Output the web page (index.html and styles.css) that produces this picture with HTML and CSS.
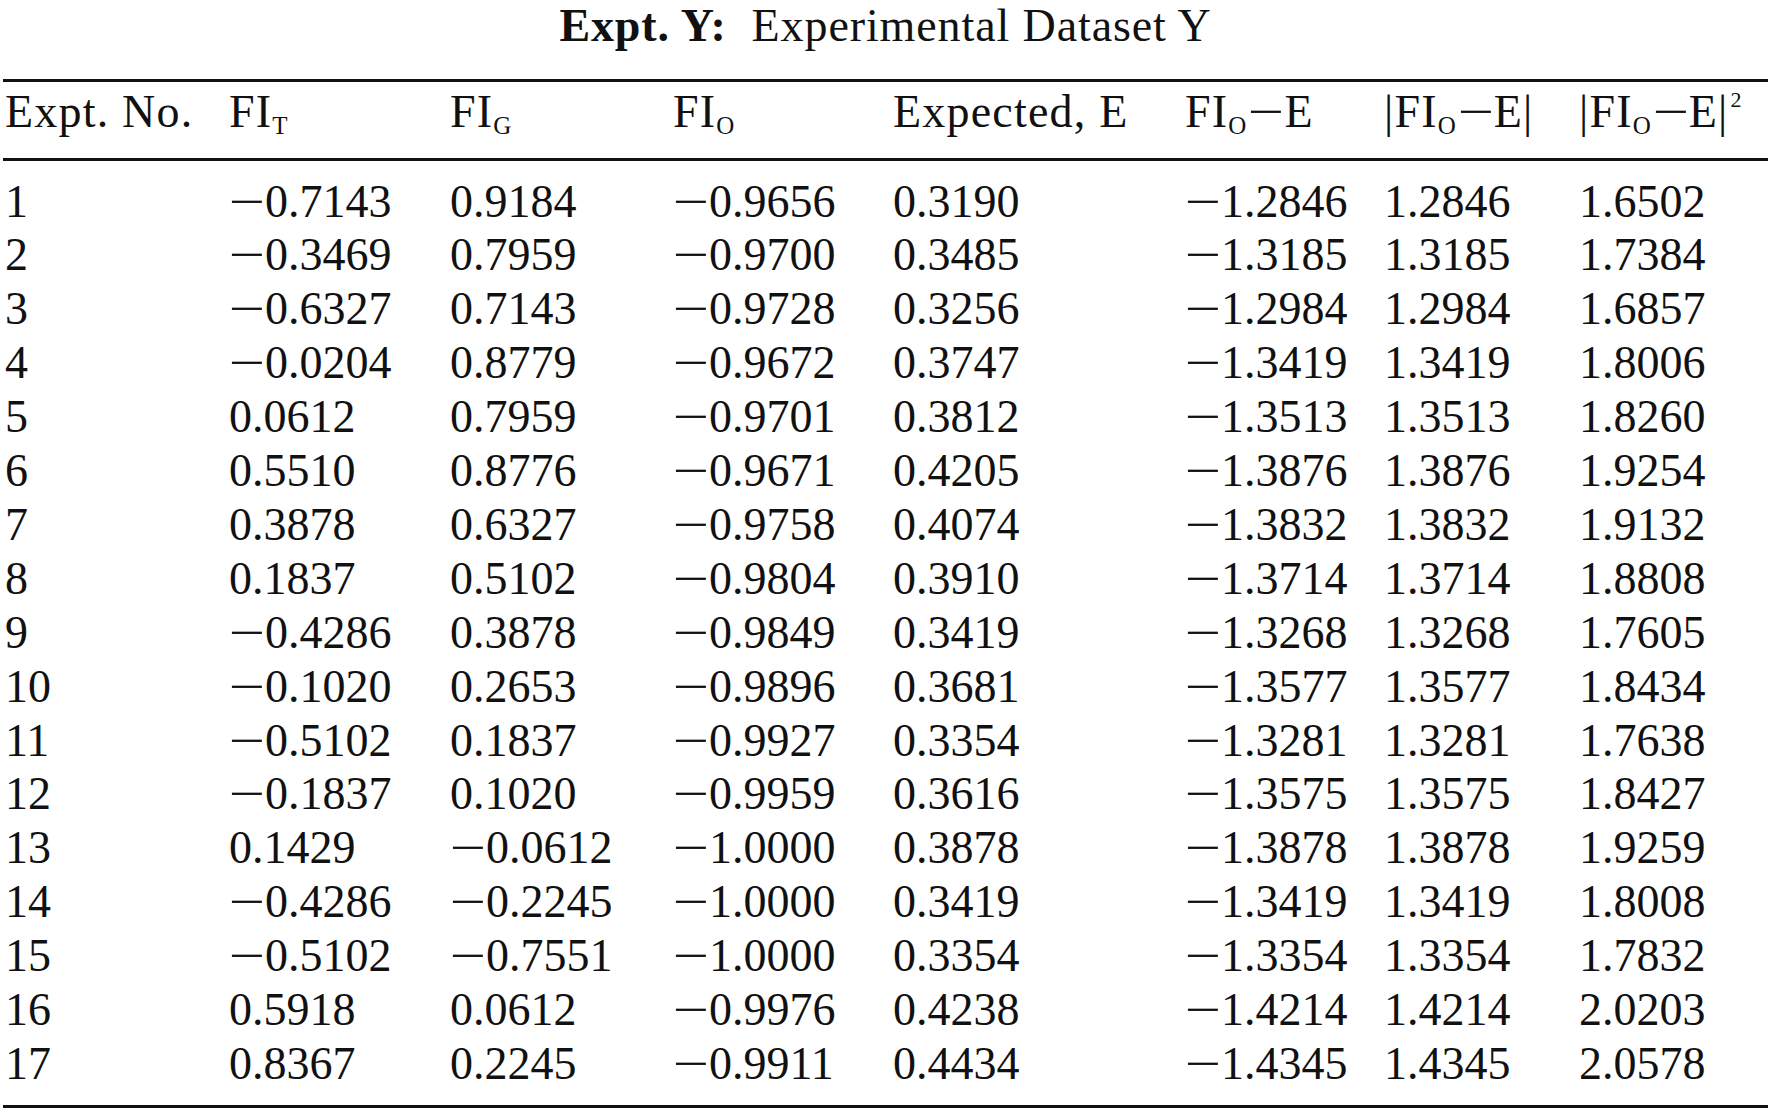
FILE: index.html
```html
<!DOCTYPE html>
<html lang="en">
<head>
<meta charset="utf-8">
<title>Expt. Y: Experimental Dataset Y</title>
<link rel="stylesheet" href="styles.css">
</head>
<body>
<div class="page">
  <h1 class="title"><b>Expt. Y:</b>&nbsp; Experimental Dataset Y</h1>
  <table class="data">
    <colgroup>
      <col class="c1"><col class="c2"><col class="c3"><col class="c4"><col class="c5"><col class="c6"><col class="c7"><col class="c8">
    </colgroup>
    <thead>
      <tr>
        <th class="first">Expt. No.</th>
        <th>FI<span class="sub">T</span></th>
        <th>FI<span class="sub">G</span></th>
        <th>FI<span class="sub">O</span></th>
        <th>Expected, E</th>
        <th>FI<span class="sub">O</span><span class="m">−</span>E</th>
        <th>|FI<span class="sub">O</span><span class="m">−</span>E|</th>
        <th>|FI<span class="sub">O</span><span class="m">−</span>E|<span class="sup">2</span></th>
      </tr>
    </thead>
    <tbody>
      <tr><td class="first">1</td><td><span class="m">−</span>0.7143</td><td>0.9184</td><td><span class="m">−</span>0.9656</td><td>0.3190</td><td><span class="m">−</span>1.2846</td><td>1.2846</td><td>1.6502</td></tr>
      <tr><td class="first">2</td><td><span class="m">−</span>0.3469</td><td>0.7959</td><td><span class="m">−</span>0.9700</td><td>0.3485</td><td><span class="m">−</span>1.3185</td><td>1.3185</td><td>1.7384</td></tr>
      <tr><td class="first">3</td><td><span class="m">−</span>0.6327</td><td>0.7143</td><td><span class="m">−</span>0.9728</td><td>0.3256</td><td><span class="m">−</span>1.2984</td><td>1.2984</td><td>1.6857</td></tr>
      <tr><td class="first">4</td><td><span class="m">−</span>0.0204</td><td>0.8779</td><td><span class="m">−</span>0.9672</td><td>0.3747</td><td><span class="m">−</span>1.3419</td><td>1.3419</td><td>1.8006</td></tr>
      <tr><td class="first">5</td><td>0.0612</td><td>0.7959</td><td><span class="m">−</span>0.9701</td><td>0.3812</td><td><span class="m">−</span>1.3513</td><td>1.3513</td><td>1.8260</td></tr>
      <tr><td class="first">6</td><td>0.5510</td><td>0.8776</td><td><span class="m">−</span>0.9671</td><td>0.4205</td><td><span class="m">−</span>1.3876</td><td>1.3876</td><td>1.9254</td></tr>
      <tr><td class="first">7</td><td>0.3878</td><td>0.6327</td><td><span class="m">−</span>0.9758</td><td>0.4074</td><td><span class="m">−</span>1.3832</td><td>1.3832</td><td>1.9132</td></tr>
      <tr><td class="first">8</td><td>0.1837</td><td>0.5102</td><td><span class="m">−</span>0.9804</td><td>0.3910</td><td><span class="m">−</span>1.3714</td><td>1.3714</td><td>1.8808</td></tr>
      <tr><td class="first">9</td><td><span class="m">−</span>0.4286</td><td>0.3878</td><td><span class="m">−</span>0.9849</td><td>0.3419</td><td><span class="m">−</span>1.3268</td><td>1.3268</td><td>1.7605</td></tr>
      <tr><td class="first">10</td><td><span class="m">−</span>0.1020</td><td>0.2653</td><td><span class="m">−</span>0.9896</td><td>0.3681</td><td><span class="m">−</span>1.3577</td><td>1.3577</td><td>1.8434</td></tr>
      <tr><td class="first">11</td><td><span class="m">−</span>0.5102</td><td>0.1837</td><td><span class="m">−</span>0.9927</td><td>0.3354</td><td><span class="m">−</span>1.3281</td><td>1.3281</td><td>1.7638</td></tr>
      <tr><td class="first">12</td><td><span class="m">−</span>0.1837</td><td>0.1020</td><td><span class="m">−</span>0.9959</td><td>0.3616</td><td><span class="m">−</span>1.3575</td><td>1.3575</td><td>1.8427</td></tr>
      <tr><td class="first">13</td><td>0.1429</td><td><span class="m">−</span>0.0612</td><td><span class="m">−</span>1.0000</td><td>0.3878</td><td><span class="m">−</span>1.3878</td><td>1.3878</td><td>1.9259</td></tr>
      <tr><td class="first">14</td><td><span class="m">−</span>0.4286</td><td><span class="m">−</span>0.2245</td><td><span class="m">−</span>1.0000</td><td>0.3419</td><td><span class="m">−</span>1.3419</td><td>1.3419</td><td>1.8008</td></tr>
      <tr><td class="first">15</td><td><span class="m">−</span>0.5102</td><td><span class="m">−</span>0.7551</td><td><span class="m">−</span>1.0000</td><td>0.3354</td><td><span class="m">−</span>1.3354</td><td>1.3354</td><td>1.7832</td></tr>
      <tr><td class="first">16</td><td>0.5918</td><td>0.0612</td><td><span class="m">−</span>0.9976</td><td>0.4238</td><td><span class="m">−</span>1.4214</td><td>1.4214</td><td>2.0203</td></tr>
      <tr><td class="first">17</td><td>0.8367</td><td>0.2245</td><td><span class="m">−</span>0.9911</td><td>0.4434</td><td><span class="m">−</span>1.4345</td><td>1.4345</td><td>2.0578</td></tr>
    </tbody>
  </table>
</div>
</body>
</html>
```

FILE: styles.css
```css
html, body {
  margin: 0;
  padding: 0;
  background: #ffffff;
}

.page {
  width: 1771px;
  height: 1112px;
  overflow: hidden;
  font-family: "Liberation Serif", "Times New Roman", serif;
  color: #111111;
  font-size: 46px;
}

.title {
  margin: 0 0 29px 0;
  height: 50px;
  line-height: 51px;
  font-size: 46px;
  letter-spacing: 0.9px;
  font-weight: normal;
  text-align: center;
}

.title b {
  font-weight: bold;
}

.data {
  margin-left: 3px;
  width: 1765px;
  table-layout: fixed;
  border-collapse: separate;
  border-spacing: 0;
  border-top: 3px solid #111111;
  border-bottom: 3px solid #111111;
}

.c1 { width: 226px; }
.c2 { width: 221px; }
.c3 { width: 223px; }
.c4 { width: 220px; }
.c5 { width: 292px; }
.c6 { width: 199px; }
.c7 { width: 195px; }
.c8 { width: 189px; }

.data th,
.data td {
  padding: 0;
  text-align: left;
  white-space: nowrap;
  font-weight: normal;
  vertical-align: baseline;
}

.data th {
  line-height: 50px;
  padding-top: 5px;
  padding-bottom: 20px;
  letter-spacing: 1.2px;
  border-bottom: 3px solid #111111;
}

.data td {
  line-height: 53.9px;
  height: 53.9px;
}

.data tbody tr:first-child td {
  padding-top: 13.5px;
}

.data tbody tr:last-child td {
  padding-bottom: 14px;
}

.data .first {
  padding-left: 2px;
}

.m {
  display: inline-block;
  width: 36px;
  letter-spacing: 0;
  transform: scaleX(1.4);
  transform-origin: 0 50%;
}

.data th .m {
  width: 36px;
  margin-left: 2px;
}

.sub {
  font-size: 25px;
  letter-spacing: 0;
  line-height: 1;
  vertical-align: -7px;
}

.sup {
  font-size: 22px;
  letter-spacing: 0;
  line-height: 1;
  vertical-align: 20px;
  margin-left: 2px;
}
```
